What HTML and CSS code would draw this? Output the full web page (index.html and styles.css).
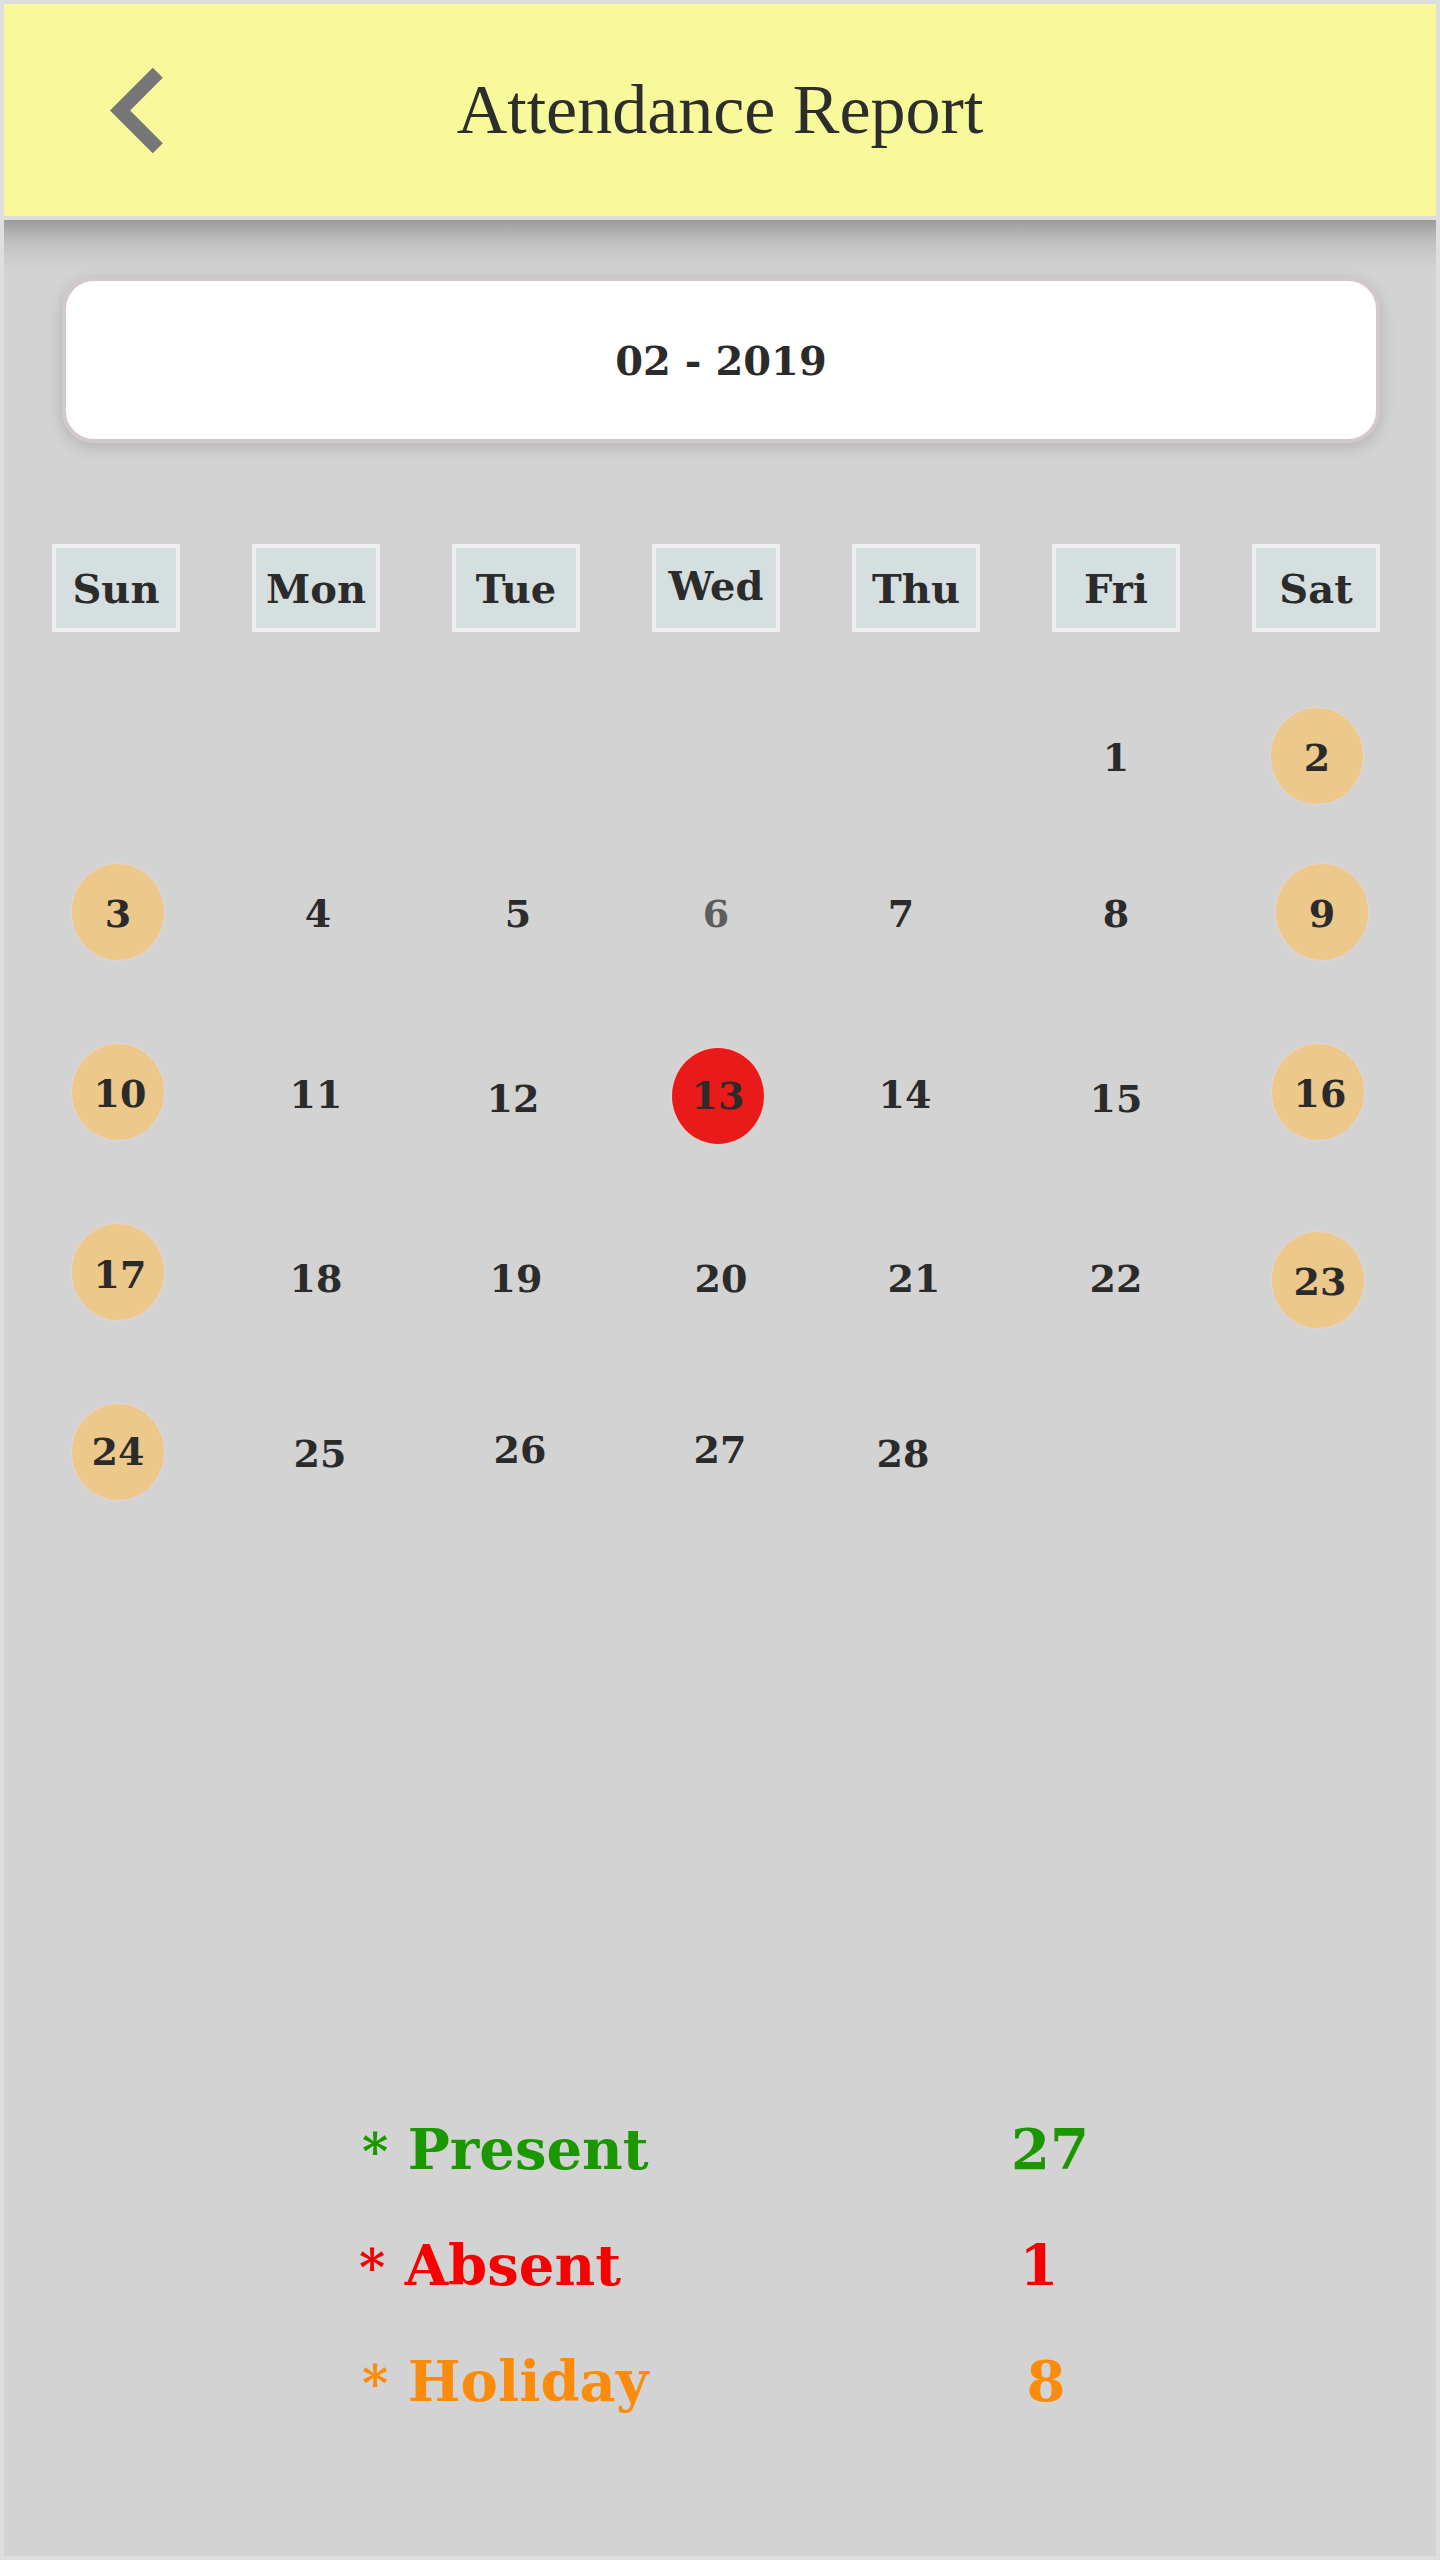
FILE: index.html
```html
<!DOCTYPE html>
<html lang="en">
<head>
<meta charset="utf-8">
<title>Attendance Report</title>
<link rel="stylesheet" href="styles.css">
</head>
<body>
<div class="page">
  <header class="header">
    <svg class="back" viewBox="0 0 24 24" aria-hidden="true"><path d="M15.41 7.41L14 6l-6 6 6 6 1.41-1.41L10.83 12z"/></svg>
    <h1 class="title">Attendance Report</h1>
    <span></span>
  </header>

  <main class="content">
    <div class="month-card"><span class="month">02 - 2019</span></div>

    <div class="calendar">
      <div class="weekdays">
        <div class="cell"><span class="wd">Sun</span></div>
        <div class="cell"><span class="wd">Mon</span></div>
        <div class="cell"><span class="wd">Tue</span></div>
        <div class="cell"><span class="wd wd-up">Wed</span></div>
        <div class="cell"><span class="wd">Thu</span></div>
        <div class="cell"><span class="wd">Fri</span></div>
        <div class="cell"><span class="wd">Sat</span></div>
      </div>

      <div class="week w1">
        <div class="cell"></div>
        <div class="cell"></div>
        <div class="cell"></div>
        <div class="cell"></div>
        <div class="cell"></div>
        <div class="cell"><span class="num y2">1</span></div>
        <div class="cell"><span class="circle holiday x1"><span class="num y2">2</span></span></div>
      </div>

      <div class="week w2">
        <div class="cell"><span class="circle holiday x2"><span class="num y2">3</span></span></div>
        <div class="cell"><span class="num x2 y2">4</span></div>
        <div class="cell"><span class="num x2 y2">5</span></div>
        <div class="cell"><span class="num muted y2">6</span></div>
        <div class="cell"><span class="num xm15 y2">7</span></div>
        <div class="cell"><span class="num y2">8</span></div>
        <div class="cell"><span class="circle holiday x6"><span class="num y2">9</span></span></div>
      </div>

      <div class="week w3">
        <div class="cell"><span class="circle holiday x2"><span class="num x2 y2">10</span></span></div>
        <div class="cell"><span class="num y3">11</span></div>
        <div class="cell"><span class="num xm3 y7">12</span></div>
        <div class="cell"><span class="circle absent x2 y4"><span class="num">13</span></span></div>
        <div class="cell"><span class="num xm11 y3">14</span></div>
        <div class="cell"><span class="num y7">15</span></div>
        <div class="cell"><span class="circle holiday x2"><span class="num x2 y2">16</span></span></div>
      </div>

      <div class="week w4">
        <div class="cell"><span class="circle holiday x2"><span class="num x2 y3">17</span></span></div>
        <div class="cell"><span class="num y7">18</span></div>
        <div class="cell"><span class="num y7">19</span></div>
        <div class="cell"><span class="num x5 y7">20</span></div>
        <div class="cell"><span class="num xm2 y7">21</span></div>
        <div class="cell"><span class="num y7">22</span></div>
        <div class="cell"><span class="circle holiday x2 y8"><span class="num x2 y2">23</span></span></div>
      </div>

      <div class="week w5">
        <div class="cell"><span class="circle holiday x2"><span class="num">24</span></span></div>
        <div class="cell"><span class="num x4 y2">25</span></div>
        <div class="cell"><span class="num x4 ym2">26</span></div>
        <div class="cell"><span class="num x4 ym2">27</span></div>
        <div class="cell"><span class="num xm13 y2">28</span></div>
        <div class="cell"></div>
        <div class="cell"></div>
      </div>
    </div>

    <div class="legend">
      <div class="label present"><span class="star">*</span> Present</div>
      <div class="value present x4">27</div>
      <div class="label absent shift-l"><span class="star">*</span> Absent</div>
      <div class="value absent xm7">1</div>
      <div class="label holiday-c"><span class="star">*</span> Holiday</div>
      <div class="value holiday-c">8</div>
    </div>
  </main>
</div>
</body>
</html>
```

FILE: styles.css
```css
* {
  box-sizing: border-box;
}

html, body {
  margin: 0;
  padding: 0;
}

body {
  width: 1440px;
  height: 2560px;
  background: #dedede;
  padding: 4px;
  font-family: "DejaVu Serif", "Liberation Serif", serif;
  color: #2b2b2b;
}

.page {
  display: flex;
  flex-direction: column;
  gap: 4px;
  height: 2552px;
}

.header {
  height: 212px;
  flex: none;
  background: #f7f99a;
  display: grid;
  grid-template-columns: 1fr auto 1fr;
  align-items: center;
}

.back {
  width: 171px;
  height: 171px;
  margin-left: 49px;
  fill: #767676;
  display: block;
}

.title {
  margin: 0;
  font-family: "Liberation Serif", "Times New Roman", serif;
  font-weight: 400;
  font-size: 70px;
  color: #2d2d2d;
  line-height: normal;
}

.content {
  flex: 1;
  background:
    linear-gradient(to bottom,
      rgba(0, 0, 0, 0.27) 0px,
      rgba(0, 0, 0, 0.18) 10px,
      rgba(0, 0, 0, 0.09) 22px,
      rgba(0, 0, 0, 0.03) 38px,
      rgba(0, 0, 0, 0) 54px),
    #d3d3d3;
  display: flex;
  flex-direction: column;
}

.month-card {
  margin: 57px 56px 0 58px;
  height: 166px;
  background: #ffffff;
  border: 4px solid #d3c9cb;
  border-radius: 32px;
  box-shadow: 0 4px 16px rgba(0, 0, 0, 0.16);
  display: flex;
  align-items: center;
  justify-content: center;
}

.month {
  font-weight: 700;
  font-size: 40px;
  color: #2b2b2b;
}

.calendar {
  padding-left: 12px;
}

.weekdays,
.week {
  display: grid;
  grid-template-columns: repeat(7, 200px);
}

.weekdays {
  margin-top: 101px;
  height: 88px;
}

.cell {
  display: flex;
  align-items: center;
  justify-content: center;
}

.wd {
  width: 128px;
  height: 88px;
  border: 4px solid #eeeeee;
  background: #d6dfdf;
  display: flex;
  align-items: center;
  justify-content: center;
  font-weight: 700;
  font-size: 40px;
  color: #2b2b2b;
}

.wd-up {
  padding-bottom: 6px;
}

.week {
  height: 96px;
  margin-top: 84px;
}

.week.w1 {
  margin-top: 76px;
}

.week.w2 {
  margin-top: 60px;
}

.circle {
  width: 92px;
  height: 96px;
  border-radius: 50%;
  display: flex;
  align-items: center;
  justify-content: center;
  position: relative;
  box-shadow: 0 0 2px 1px rgba(232, 212, 206, 0.9);
}

.circle.holiday {
  background: #ecc88b;
}

.circle.absent {
  background: #ea1a1a;
}

.num {
  position: relative;
  font-weight: 700;
  font-size: 38px;
  line-height: 1;
  color: #2b2b2b;
}

.num.muted {
  color: #5d5d5d;
}

/* small glyph nudges matching the reference rendering */
.x1 { left: 1px; }
.x2 { left: 2px; }
.x4 { left: 4px; }
.x5 { left: 5px; }
.x6 { left: 6px; }
.xm2 { left: -2px; }
.xm3 { left: -3px; }
.xm7 { left: -7px; }
.xm11 { left: -11px; }
.xm13 { left: -13px; }
.xm15 { left: -15px; }
.y2 { top: 2px; }
.y3 { top: 3px; }
.y4 { top: 4px; }
.y7 { top: 7px; }
.y8 { top: 8px; }
.ym2 { top: -2px; }

.legend {
  margin-top: 591px;
  padding-left: 358px;
  display: grid;
  grid-template-columns: 584px 200px;
  grid-auto-rows: 116px;
  font-weight: 700;
  font-size: 56px;
  line-height: 116px;
}

.label {
  white-space: nowrap;
}

.star {
  font-size: 50px;
}

.label.shift-l {
  margin-left: -3px;
}

.value {
  text-align: center;
  position: relative;
}

.present {
  color: #1b9700;
}

.absent {
  color: #f80000;
}

.holiday-c {
  color: #fb8c0b;
}
```
